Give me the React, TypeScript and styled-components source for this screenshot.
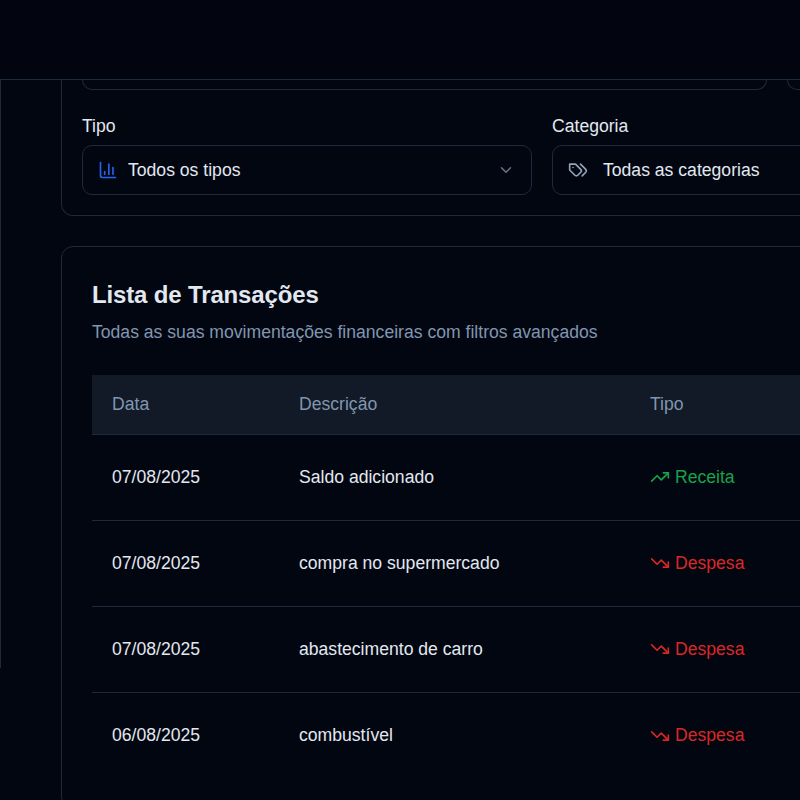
import React from "react";
import styled, { createGlobalStyle } from "styled-components";
import { ChartColumn, ChevronDown, TrendingDown, TrendingUp } from "lucide-react";

const GlobalStyle = createGlobalStyle`
	html, body {
		margin: 0;
		height: 100%;
		overflow: hidden;
		background: #020611;
	}

	* {
		box-sizing: border-box;
	}
`;

const Page = styled.div`
	width: 800px;
	height: 800px;
	overflow: hidden;
	background: #020611;
	color: #e2e8f0;
	font-family: "Liberation Sans", Arial, sans-serif;
`;

const Header = styled.header`
	height: 80px;
	border-bottom: 1px solid #1e293b;
	background: #02050f;
`;

const Body = styled.div`
	display: flex;
	align-items: flex-start;
`;

const Sidebar = styled.aside`
	flex: none;
	width: 1px;
	height: 588px;
	background: #1e293b;
`;

const Main = styled.main`
	flex: none;
	width: 1432px;
	margin-left: 60px;
	display: flex;
	flex-direction: column;
	gap: 30px;
`;

const FilterCard = styled.section`
	border: 1px solid #1e293b;
	border-top: 0;
	border-radius: 0 0 12px 12px;
	padding: 0 20px 20px;
`;

const StubRow = styled.div`
	display: grid;
	grid-template-columns: repeat(2, 1fr);
	gap: 20px;
	margin-bottom: 25px;
`;

const InputStub = styled.div`
	height: 10px;
	border: 1px solid #1e293b;
	border-top: 0;
	border-radius: 0 0 10px 10px;
`;

const FilterRow = styled.div`
	display: grid;
	grid-template-columns: repeat(3, 1fr);
	gap: 20px;
`;

const Field = styled.div`
	display: flex;
	flex-direction: column;
	gap: 8px;
`;

const Label = styled.label`
	font-size: 17.6px;
	line-height: 22px;
	color: #e2e8f0;
`;

const Select = styled.div`
	height: 50px;
	display: flex;
	align-items: center;
	padding: 0 16px 0 15px;
	border: 1px solid #1e293b;
	border-radius: 10px;
	font-size: 17.6px;
`;

const SelectIcon = styled.span<{ $color: string; $gap: number }>`
	display: flex;
	margin-right: ${(p) => p.$gap}px;
	color: ${(p) => p.$color};
`;

const SelectText = styled.span`
	flex: 1;
`;

const Chevron = styled(ChevronDown)`
	color: #64748b;
`;

const ListCard = styled.section`
	border: 1px solid #1e293b;
	border-radius: 12px;
	padding: 30px;
`;

const Title = styled.h2`
	margin: 0;
	font-size: 24px;
	line-height: 36px;
	font-weight: 700;
	letter-spacing: -0.15px;
	color: #e2e8f0;
`;

const Subtitle = styled.p`
	margin: 7px 0 31px;
	font-size: 17.6px;
	line-height: 24px;
	color: #8096b0;
`;

const Table = styled.table`
	width: 100%;
	table-layout: fixed;
	border-collapse: collapse;
	font-size: 17.6px;
`;

const HeadRow = styled.tr`
	height: 59px;
	background: #111a26;
	border-bottom: 1px solid #1e293b;
`;

const HeadCell = styled.th<{ $width?: number }>`
	width: ${(p) => (p.$width ? `${p.$width}px` : "auto")};
	padding: 0 20px;
	text-align: left;
	font-weight: 400;
	color: #8096b0;
`;

const Row = styled.tr`
	height: 86px;
	border-bottom: 1px solid #1e293b;

	&:last-child {
		border-bottom: 0;
	}
`;

const Cell = styled.td`
	padding: 0 20px;
	color: #e2e8f0;
`;

const Kind = styled.span<{ $income: boolean }>`
	display: inline-flex;
	align-items: center;
	gap: 5px;
	vertical-align: middle;
	color: ${(p) => (p.$income ? "#16a34a" : "#dc2626")};
`;

// lucide's newer "tags" is a different shape, this is the one in the picture
const TagsIcon: React.FC = () => (
	<svg
		width="20"
		height="20"
		viewBox="0 0 24 24"
		fill="none"
		stroke="currentColor"
		strokeWidth="2"
		strokeLinecap="round"
		strokeLinejoin="round"
	>
		<path d="M9 5H2v7l6.29 6.29c.94.94 2.48.94 3.42 0l3.58-3.58c.94-.94.94-2.48 0-3.42L9 5Z" />
		<path d="M6 9.01V9" />
		<path d="m15 5 6.3 6.3a2.4 2.4 0 0 1 0 3.4L17 19" />
	</svg>
);

const transactions = [
	{ date: "07/08/2025", description: "Saldo adicionado", income: true },
	{ date: "07/08/2025", description: "compra no supermercado", income: false },
	{ date: "07/08/2025", description: "abastecimento de carro", income: false },
	{ date: "06/08/2025", description: "combustível", income: false },
];

const App: React.FC = () => {
	return (
		<Page>
			<GlobalStyle />
			<Header />
			<Body>
				<Sidebar />
				<Main>
					<FilterCard>
						<StubRow>
							<InputStub />
							<InputStub />
						</StubRow>
						<FilterRow>
							<Field>
								<Label>Tipo</Label>
								<Select>
									<SelectIcon $color="#2563eb" $gap={10}>
										<ChartColumn size={20} />
									</SelectIcon>
									<SelectText>Todos os tipos</SelectText>
									<Chevron size={18} />
								</Select>
							</Field>
							<Field>
								<Label>Categoria</Label>
								<Select>
									<SelectIcon $color="#94a3b8" $gap={15}>
										<TagsIcon />
									</SelectIcon>
									<SelectText>Todas as categorias</SelectText>
									<Chevron size={18} />
								</Select>
							</Field>
						</FilterRow>
					</FilterCard>

					<ListCard>
						<Title>Lista de Transações</Title>
						<Subtitle>
							Todas as suas movimentações financeiras com filtros avançados
						</Subtitle>
						<Table>
							<thead>
								<HeadRow>
									<HeadCell $width={187}>Data</HeadCell>
									<HeadCell $width={351}>Descrição</HeadCell>
									<HeadCell>Tipo</HeadCell>
								</HeadRow>
							</thead>
							<tbody>
								{transactions.map((t) => (
									<Row key={t.description}>
										<Cell>{t.date}</Cell>
										<Cell>{t.description}</Cell>
										<Cell>
											<Kind $income={t.income}>
												{t.income ? (
													<TrendingUp size={20} />
												) : (
													<TrendingDown size={20} />
												)}
												{t.income ? "Receita" : "Despesa"}
											</Kind>
										</Cell>
									</Row>
								))}
							</tbody>
						</Table>
					</ListCard>
				</Main>
			</Body>
		</Page>
	);
};

export default App;
